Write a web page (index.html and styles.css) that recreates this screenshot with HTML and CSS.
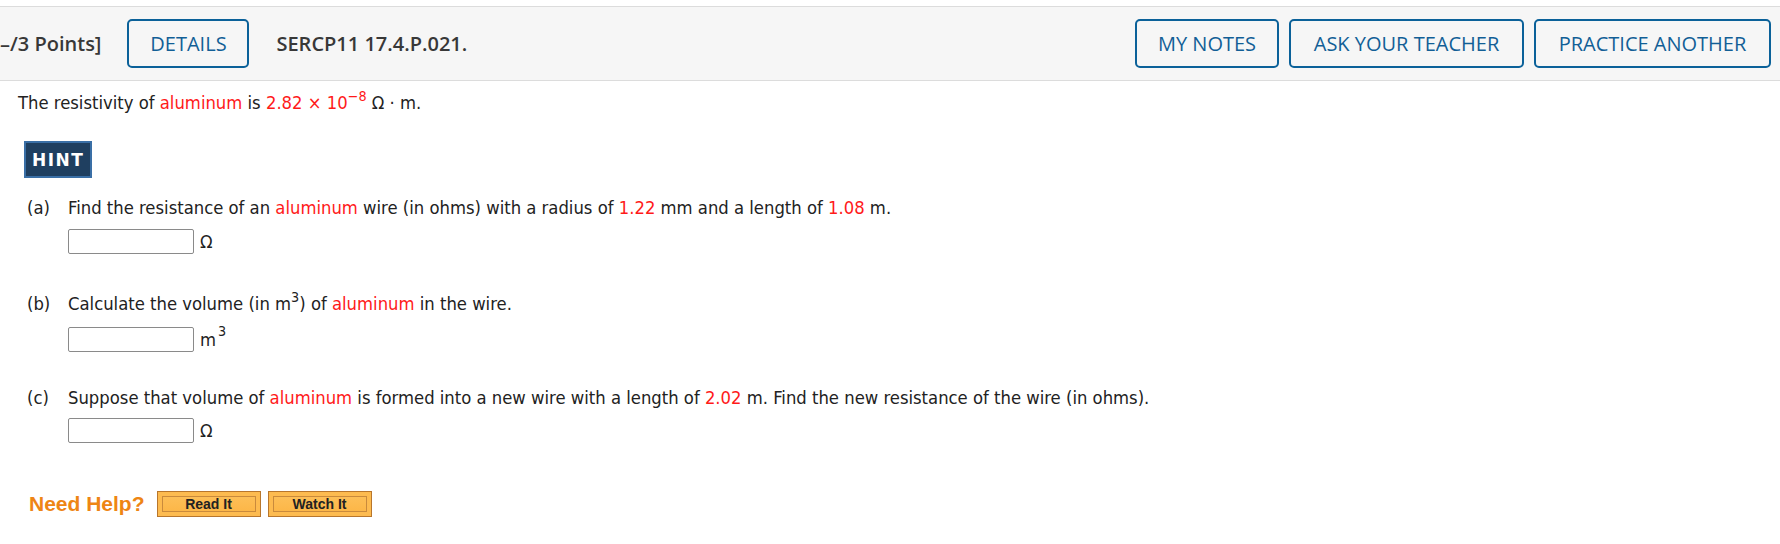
FILE: index.html
```html
<!DOCTYPE html>
<html>
<head>
<meta charset="utf-8">
<link rel="stylesheet" href="styles.css">
</head>
<body>
<div class="header">
  <span class="points">–/3 Points]</span>
  <button class="hbtn details">DETAILS</button>
  <span class="qid">SERCP11 17.4.P.021.</span>
  <div class="hright">
    <button class="hbtn w-notes">MY NOTES</button>
    <button class="hbtn w-ask">ASK YOUR TEACHER</button>
    <button class="hbtn w-practice">PRACTICE ANOTHER</button>
  </div>
</div>
<div class="content">
  <p class="intro">The resistivity of <span class="red">aluminum</span> is <span class="red">2.82 × 10<sup>−8</sup></span> Ω · m.</p>
  <button class="hint">HINT</button>
  <div class="part part-a">
    <div class="qline"><span class="lbl">(a)</span><span>Find the resistance of an <span class="red">aluminum</span> wire (in ohms) with a radius of <span class="red">1.22</span> mm and a length of <span class="red">1.08</span> m.</span></div>
    <div class="ans"><span class="box"></span><span class="unit">Ω</span></div>
  </div>
  <div class="part part-b">
    <div class="qline"><span class="lbl">(b)</span><span>Calculate the volume (in m<sup>3</sup>) of <span class="red">aluminum</span> in the wire.</span></div>
    <div class="ans"><span class="box"></span><span class="unit">m<sup class="usup">3</sup></span></div>
  </div>
  <div class="part part-c">
    <div class="qline"><span class="lbl">(c)</span><span>Suppose that volume of <span class="red">aluminum</span> is formed into a new wire with a length of <span class="red">2.02</span> m. Find the new resistance of the wire (in ohms).</span></div>
    <div class="ans"><span class="box"></span><span class="unit">Ω</span></div>
  </div>
  <div class="help">
    <span class="needhelp">Need Help?</span>
    <button class="obtn">Read It</button>
    <button class="obtn">Watch It</button>
  </div>
</div>
</body>
</html>
```
FILE: styles.css
```css
body {
  margin: 0;
  background: #fff;
  font-family: "DejaVu Sans Condensed", "DejaVu Sans", sans-serif;
  color: #222;
}
.header {
  margin-top: 6px;
  height: 73px;
  background: #f6f6f6;
  border-top: 1px solid #dcdcdc;
  border-bottom: 1px solid #dcdcdc;
  display: flex;
  align-items: center;
  font-family: "Open Sans", sans-serif;
}
.points {
  font-weight: 600;
  font-size: 20px;
  color: #383838;
}
.hbtn {
  font-family: "Open Sans", sans-serif;
  font-size: 20px;
  color: #125f96;
  background: transparent;
  border: 2px solid #0b6199;
  border-radius: 5px;
  height: 49px;
  padding: 0;
}
.details {
  margin-left: 26px;
  width: 122px;
}
.w-notes { width: 144px; }
.w-ask { width: 235px; }
.w-practice { width: 237px; }
.qid {
  margin-left: 27px;
  font-weight: 600;
  font-size: 20px;
  color: #383838;
}
.hright {
  margin-left: auto;
  margin-right: 9px;
  display: flex;
  gap: 10px;
}
.content {
  padding-left: 18px;
}
.intro {
  margin: 11px 0 0;
  font-size: 18.3px;
  line-height: 22px;
}
.red { color: #ff1a1a; }
sup { font-size: 78%; line-height: 0; vertical-align: 0.55em; }
.hint {
  display: block;
  margin: 27px 0 0 6px;
  background: #1f3f60;
  border: 2px solid #3a6fa6;
  color: #fff;
  font-family: "DejaVu Sans", sans-serif;
  font-weight: bold;
  font-size: 17px;
  letter-spacing: 1.5px;
  height: 37px;
  padding: 0 6px;
}
.part {
  margin-left: 9px;
}
.part-a { margin-top: 19px; }
.part-b { margin-top: 39px; }
.part-c { margin-top: 35px; }
.qline {
  display: flex;
  font-size: 18.3px;
  line-height: 22px;
}
.lbl { width: 41px; flex: none; }
.ans {
  margin: 10px 0 0 41px;
  display: flex;
  align-items: center;
}
.part-b .ans { margin-top: 12px; }
.part-c .ans { margin-top: 9px; }
.box {
  width: 124px;
  height: 23px;
  border: 1px solid #8a8a8a;
  border-radius: 2px;
  background: #fff;
}
.unit {
  margin-left: 6px;
  font-size: 18.3px;
}
.usup { margin-left: 2px; vertical-align: 0.7em; }
.help {
  margin: 48px 0 0 11px;
  display: flex;
  align-items: center;
}
.needhelp {
  font-family: "Liberation Sans", sans-serif;
  font-size: 21px;
  font-weight: bold;
  color: #ee8514;
  margin-right: 12px;
}
.obtn {
  width: 104px;
  height: 26px;
  margin-right: 7px;
  background: linear-gradient(#fdc15c, #fcb443);
  border: 1px solid #b8762c;
  box-shadow: inset 0 0 0 4px #fdbb50, inset 0 0 0 5px #c98a3c;
  font-family: "Liberation Sans", sans-serif;
  font-weight: bold;
  font-size: 14px;
  color: #222;
  padding: 0;
}
```
